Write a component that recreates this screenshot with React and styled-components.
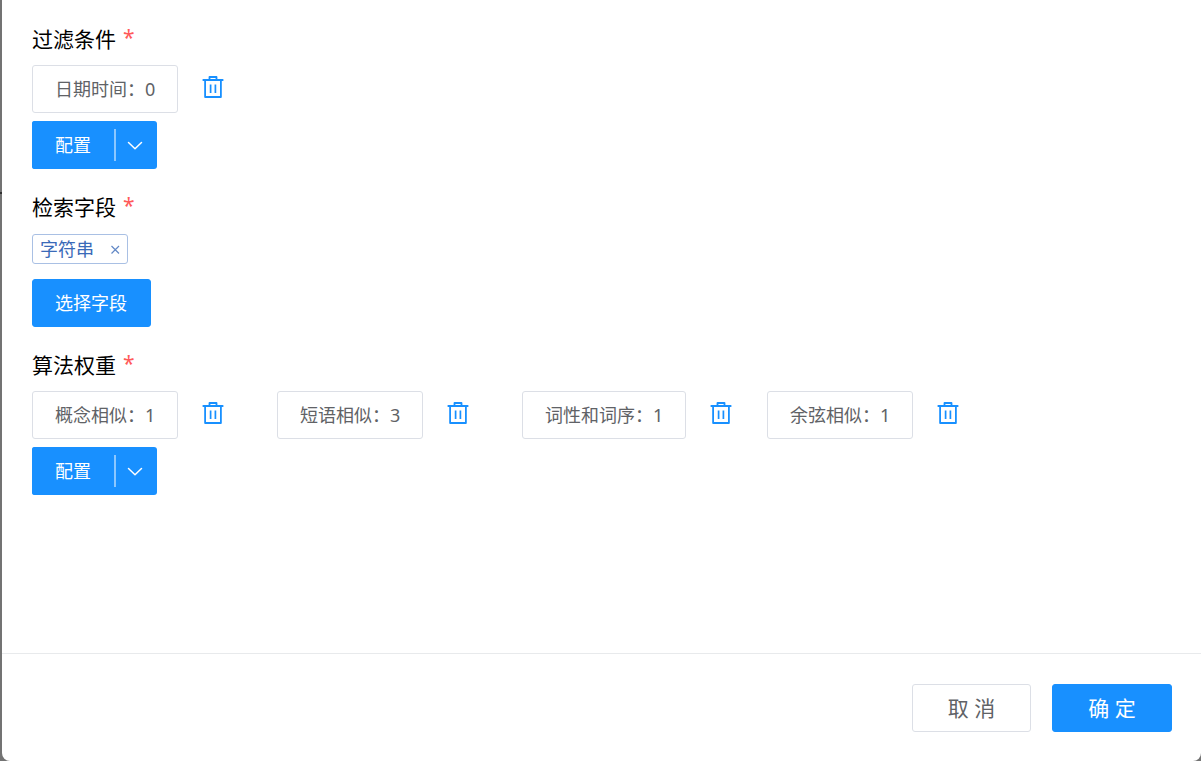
import React from 'react';
import styled, { createGlobalStyle, css } from 'styled-components';

const GlobalStyle = createGlobalStyle`
  *, *::before, *::after { box-sizing: border-box; }
  body {
    margin: 0;
    background: #737373;
    font-family: 'Noto Sans', 'Noto Sans CJK SC', sans-serif;
  }
`;

const Backdrop = styled.div`
  display: flex;
  min-height: 100vh;
  padding-left: 2px;
  background: linear-gradient(#737373 192px, #303030 192px, #303030 194px, #737373 194px);
`;

const Dialog = styled.section`
  flex: 1;
  min-width: 0;
  display: flex;
  flex-direction: column;
  background: #fff;
  border-radius: 0 0 8px 8px;
`;

const Body = styled.div`
  flex: 1;
  display: flex;
  flex-direction: column;
  gap: 24px;
  padding: 25px 30px;
`;

const Field = styled.section`
  display: flex;
  flex-direction: column;
  align-items: flex-start;
`;

const Title = styled.h2`
  display: flex;
  gap: 7px;
  margin: 0 0 12px;
  color: #000;
  font-size: 21px;
  font-weight: 400;
  line-height: 28px;
`;

const Required = styled.span`
  color: #ff5a5a;
  line-height: 24px;
`;

const Items = styled.div`
  width: 100%;
  display: grid;
  grid-template-columns: repeat(auto-fill, 245px);
  margin-bottom: 8px;
`;

const Item = styled.div`
  display: flex;
  align-items: center;
  gap: 24px;
`;

const primary = css`
  padding-right: 23px;
  border-color: #1890ff;
  background: #1890ff;
  color: #fff;
`;

const Button = styled.button`
  height: 48px;
  padding: 0 22px;
  border: 1px solid #dcdfe6;
  border-radius: 3px;
  background: #fff;
  color: #606266;
  font-family: inherit;
  font-size: 18px;
  line-height: 24px;
  white-space: nowrap;
  cursor: pointer;
  ${(p) => p.$primary && primary}
`;

const FooterButton = styled(Button)`
  min-width: ${(p) => (p.$primary ? 120 : 119)}px;
  padding: 0 22px;
  font-size: 21px;
`;

const IconButton = styled.button`
  display: flex;
  padding: 0;
  border: 0;
  margin-bottom: 4px;
  background: none;
  color: #1890ff;
  cursor: pointer;
`;

const Split = styled.div`
  display: flex;
  align-items: center;
  border-radius: 3px;
  background: #1890ff;
`;

const SplitMain = styled(Button)`
  border-right: 0;
`;

const Divider = styled.span`
  width: 2px;
  height: 32px;
  background: #8bc7ff;
`;

const SplitToggle = styled.button`
  display: flex;
  align-items: center;
  width: 41px;
  height: 48px;
  padding: 0 11px;
  border: 0;
  background: none;
  color: #fff;
  cursor: pointer;
`;

const Tag = styled.span`
  display: flex;
  align-items: center;
  height: 30px;
  margin: 1px 0 15px;
  padding: 0 7px;
  gap: 16px;
  border: 1px solid #a9c0e4;
  border-radius: 3px;
  color: #3a6ab8;
  font-size: 18px;
  line-height: 24px;
`;

const TagClose = styled.button`
  display: flex;
  padding: 0;
  border: 0;
  background: none;
  color: #6288c6;
  cursor: pointer;
`;

const Footer = styled.footer`
  display: flex;
  justify-content: flex-end;
  gap: 21px;
  padding: 30px 29px 29px;
  border-top: 1px solid #e8eaec;
`;

const TrashIcon = () => (
  <svg width="22" height="24" viewBox="0 0 22 24" fill="none" stroke="currentColor" aria-hidden="true">
    <path d="M1.3 5h19.4" strokeWidth="1.8" strokeLinecap="round" />
    <path d="M7.5 4.5V2h7v2.5" strokeWidth="1.8" strokeLinejoin="round" />
    <path d="M3.1 5v17h15.800V5" strokeWidth="1.8" strokeLinejoin="round" />
    <path d="M8.6 9.500v8.500M13.400 9.500v8.500" strokeWidth="1.7" />
  </svg>
);

const ChevronIcon = () => (
  <svg width="16" height="12" viewBox="0 0 16 12" fill="none" stroke="currentColor" strokeWidth="1.5" strokeLinecap="round" strokeLinejoin="round" aria-hidden="true">
    <path d="M1.5 3.500 8 9.700l6.500-6.200" />
  </svg>
);

const CloseIcon = () => (
  <svg width="10" height="10" viewBox="0 0 10 10" stroke="currentColor" strokeWidth="1.2" aria-hidden="true">
    <path d="M1.500 2l7.500 7.500M9 2L1.500 9.500" />
  </svg>
);

const FieldTitle = ({ children }) => (
  <Title>
    {children}
    <Required>*</Required>
  </Title>
);

const ItemList = ({ items }) => (
  <Items>
    {items.map(([name, value]) => (
      <Item key={name}>
        <Button type="button">{`${name}：${value}`}</Button>
        <IconButton type="button" aria-label={`删除${name}`}>
          <TrashIcon />
        </IconButton>
      </Item>
    ))}
  </Items>
);

const SplitButton = () => (
  <Split>
    <SplitMain type="button" $primary>配置</SplitMain>
    <Divider />
    <SplitToggle type="button" aria-label="展开">
      <ChevronIcon />
    </SplitToggle>
  </Split>
);

const filters = [['日期时间', 0]];
const weights = [
  ['概念相似', 1],
  ['短语相似', 3],
  ['词性和词序', 1],
  ['余弦相似', 1],
];

export default function App() {
  return (
    <>
      <GlobalStyle />
      <Backdrop>
        <Dialog role="dialog">
          <Body>
            <Field>
              <FieldTitle>过滤条件</FieldTitle>
              <ItemList items={filters} />
              <SplitButton />
            </Field>
            <Field>
              <FieldTitle>检索字段</FieldTitle>
              <Tag>
                字符串
                <TagClose type="button" aria-label="移除字符串">
                  <CloseIcon />
                </TagClose>
              </Tag>
              <Button type="button" $primary>选择字段</Button>
            </Field>
            <Field>
              <FieldTitle>算法权重</FieldTitle>
              <ItemList items={weights} />
              <SplitButton />
            </Field>
          </Body>
          <Footer>
            <FooterButton type="button">取 消</FooterButton>
            <FooterButton type="button" $primary>确 定</FooterButton>
          </Footer>
        </Dialog>
      </Backdrop>
    </>
  );
}
